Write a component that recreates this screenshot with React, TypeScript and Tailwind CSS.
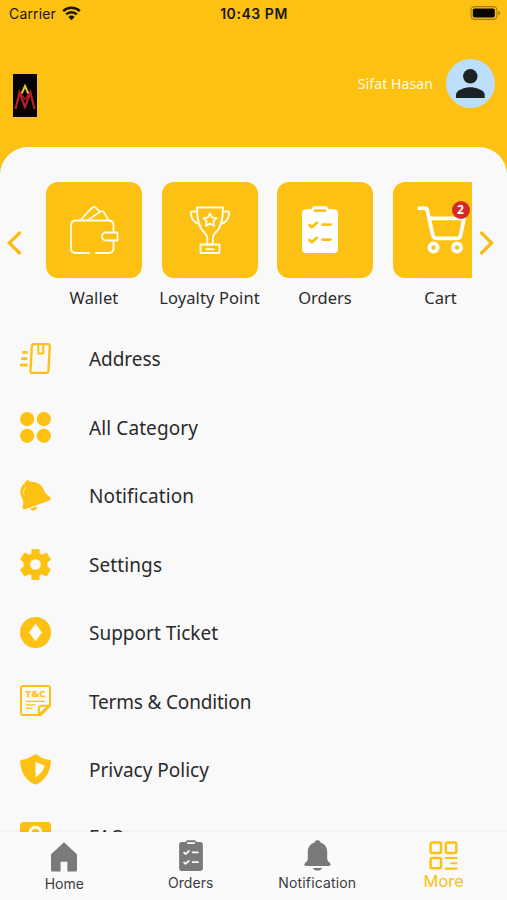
import React from "react";

type IconProps = { className?: string };

const Wifi = () => (
  <svg width="19" height="15" viewBox="0 0 19 15" fill="none" stroke="#1c1500" strokeWidth="2.5" className="-mt-0.5">
    <path d="M1.2 5.2a11.8 11.8 0 0 1 16.6 0" />
    <path d="M4.2 8.400a7.500 7.500 0 0 1 10.600 0" />
    <path d="M9.500 14.200 6.400 10.900a4.400 4.400 0 0 1 6.200 0z" fill="#1c1500" stroke="none" />
  </svg>
);

const Battery = () => (
  <svg width="31" height="14" viewBox="0 0 31 14" className="-mt-0.5">
    <rect x="1" y="0.600" width="26" height="12.800" rx="3.600" fill="none" stroke="#a37a0b" strokeWidth="1.100" />
    <rect x="2.800" y="2.400" width="22" height="9.200" rx="1.800" fill="#0a0700" />
    <path d="M28.500 4.700q1.800 .7 1.800 2.300t-1.800 2.300z" fill="#a37a0b" />
  </svg>
);

const Logo = () => (
  <svg width="24" height="43" viewBox="0 0 24 43" fill="none">
    <rect width="24" height="43" fill="#050303" />
    <path d="M2.500 35 6.500 18.500 12 33 17.500 18.500 21.500 35" stroke="#b51f28" strokeWidth="2.200" />
    <path d="m6.500 18 5.500 7.500 5.500-7.500" stroke="#b51f28" strokeWidth="1.300" />
    <path d="M8.700 19.500 12 12l3.300 7.500" stroke="#e3c22c" strokeWidth="2" />
  </svg>
);

const Avatar = () => (
  <svg width="49" height="49" viewBox="0 0 49 49">
    <circle cx="24.500" cy="24.500" r="24.500" fill="#bbdefb" />
    <circle cx="24.300" cy="17.300" r="7.200" fill="#1b2226" />
    <path d="M10 39v-3.400c0-4.800 9.500-7.400 14.300-7.400s14.400 2.600 14.400 7.400V39z" fill="#1b2226" />
  </svg>
);

const Wallet = () => (
  <svg width="96" height="96" viewBox="0 0 96 96" fill="none" stroke="#fffbe8" strokeWidth="1.800" strokeLinecap="round" strokeLinejoin="round">
    <path d="M43 71H30q-5 0-5-5V43.500q0-5 5-5h32.500q5 0 5 5V50M67.500 58.500V66q0 5-5 5H50" />
    <path d="M71.500 50.500H60a4 4 0 0 0 0 8h11.500z" />
    <path d="M34.500 38 45.500 26.200q2.200-2.400 4.700-.2l3.600 3.800M42 38l12.200-8.300q2.600-1.400 4 1L62.500 38" />
  </svg>
);

const Trophy = () => (
  <svg width="96" height="96" viewBox="0 0 96 96" fill="none" stroke="#fffbe8" strokeWidth="1.900" strokeLinejoin="round">
    <path d="M35 25.500h26c0 13-2 20.500-8.200 26-1.600 1.500-2 3-2 5v6h-5.600v-6c0-2-.4-3.500-2-5-6.200-5.500-8.200-13-8.200-26z" />
    <path d="M35 29.500h-5q-1.500 0-1.200 2c.8 6 3.600 9.500 8.400 10.200M61 29.500h5q1.500 0 1.200 2c-.8 6-3.600 9.500-8.400 10.200" />
    <path d="m48 31.300 2 4.100 4.500.7-3.200 3.200.8 4.500-4.100-2.200-4.100 2.200.8-4.500-3.200-3.200 4.500-.7z" />
    <path d="M38.500 62.500h19v8.500h-19zM43.500 67.200h9" />
  </svg>
);

const Clipboard = ({ className, mark }: IconProps & { mark: string }) => (
  <svg className={className} viewBox="0 0 36 47">
    <path d="M4 3.200h5.500Q10 .2 13 .2h10q3 0 3.500 3H32q4 0 4 4V43q0 4-4 4H4q-4 0-4-4V7.200q0-4 4-4z" fill="currentColor" />
    <g fill="none" stroke={mark} strokeWidth="2.700" strokeLinecap="round" strokeLinejoin="round">
      <path d="M13 4.700h10" />
      <path d="m7.500 19 2.300 2.300 5-4.600M20.500 18.600h8M7.500 34l2.300 2.300 5-4.600M20.500 33.600h8" />
    </g>
  </svg>
);

const Cart = () => (
  <svg width="96" height="96" viewBox="0 0 96 96" fill="none" stroke="white" strokeWidth="3.800" strokeLinejoin="round">
    <path d="M26.300 26.200h5.500q2 0 2.500 2L39.500 52q.8 4.300 4 4.300h20.700q2.800 0 3.300-2.800L71 36.400H36.500" strokeLinecap="round" />
    <circle cx="40.500" cy="65.500" r="4.100" />
    <circle cx="64" cy="65.500" r="4.100" />
  </svg>
);

const Address = () => (
  <svg width="31" height="31" viewBox="0 0 31 31" fill="none" stroke="currentColor" strokeWidth="2.300" strokeLinejoin="round">
    <path d="M13.500 1.200h14.800q1.600 0 1.500 1.600l-1.400 25.500q-.1 1.500-1.600 1.500H12q-1.600 0-1.500-1.600l1.400-25.500q.1-1.500 1.600-1.500z" />
    <path d="M18.300 1.500V10.600h5V1.500" strokeWidth="2" />
    <path d="M2.300 9.300h5.400M1.200 15.700h6M0 22.100h7.400" strokeWidth="2.700" />
  </svg>
);

const Category = () => (
  <svg width="31" height="31" viewBox="0 0 31 31" fill="currentColor">
    <circle cx="7.100" cy="7.100" r="7.100" /><circle cx="23.800" cy="7.100" r="7.100" />
    <circle cx="7.100" cy="23.800" r="7.100" /><circle cx="23.800" cy="23.800" r="7.100" />
  </svg>
);

const Bell = () => (
  <svg width="31" height="31" viewBox="0 0 31 31" fill="currentColor">
    <path d="M4.800 3.200C4.700 1.600 6 .5 7.500.4c1.400-.2 2.300.6 3 1.500 6.300-.4 11 2.700 13.200 7.700 1.300 3 2.300 4.700 5.800 7.200 1.800 1.300 1.700 3.100-.2 3.700L5.300 29.200c-1.800.6-3.200-.7-2.700-2.500C3.900 22.500 3 20.500 1.500 17-.8 11.500.4 6.500 4.800 3.200z" />
    <path d="m10.300 28.700 6.600-2.400q.3 3.500-3.100 4.200-2.300.4-3.500-1.800z" />
    <path d="M3.600 13c-.3-2.800.7-4.900 2.500-6.100" fill="none" stroke="#fff0b8" strokeWidth=".9" strokeLinecap="round" />
    <circle cx="4.200" cy="15.500" r=".6" fill="#fff0b8" />
  </svg>
);

const Gear = () => (
  <svg width="31" height="31" viewBox="0 0 31 31" fill="currentColor" stroke="currentColor" strokeWidth=".6" strokeLinejoin="round" fillRule="evenodd">
    <path d="M11.800.3h7.400v4.300l2.600 1.500L26.500 3.800 30.600 10.200l-3.500 3.500v3.600l3.500 3.500-4.100 6.400-4.700-2.300-2.600 1.500v4.300h-7.400v-4.300l-2.600-1.500-4.700 2.300L.4 20.800l3.500-3.500v-3.600L.4 10.200l4.100-6.400 4.700 2.300 2.600-1.500zM15.500 9.900a5.600 5.600 0 1 0 0 11.200 5.600 5.600 0 0 0 0-11.200z" />
  </svg>
);

const Support = () => (
  <svg width="31" height="31" viewBox="0 0 31 31">
    <circle cx="15.500" cy="15.500" r="15.500" fill="currentColor" />
    <path d="m15.500 7.200 6 8.300-6 8.300-6-8.300z" fill="#fffdf5" stroke="#fffdf5" strokeWidth=".8" strokeLinejoin="round" />
  </svg>
);

const Terms = () => (
  <svg width="31" height="31" viewBox="0 0 31 31" fill="none" stroke="currentColor" strokeWidth="2" strokeLinejoin="round">
    <path d="M3 1h25q2 0 2 2v17.700l-9.300 9.300H3q-2 0-2-2V3q0-2 2-2z" />
    <path d="M18.800 29.500V24q0-3.300 3.300-3.300h7.400z" />
    <path d="M6 16.300h19M6 19.800h9M6 23.300h6.500" strokeWidth="1.300" />
    <text x="5.300" y="12.200" fill="currentColor" stroke="none" fontFamily="Noto Sans, sans-serif" fontWeight="800" fontSize="9" textLength="20.500" lengthAdjust="spacingAndGlyphs">T&amp;C</text>
  </svg>
);

const Shield = () => (
  <svg width="31" height="31" viewBox="0 0 31 31" fill="currentColor">
    <path d="M13.800.9q1.700-1.200 3.400 0c3.700 2.800 7.600 4.300 12 4.800 1.200.2 1.800.9 1.700 2C30.200 17.500 26.200 25 17.800 29.800q-2.300 1.300-4.600 0C4.800 25 .8 17.500.1 7.700 0 6.600.6 5.900 1.800 5.700c4.400-.5 8.300-2 12-4.800z" />
    <path d="M15.500 7.700v15.500c3.800-2.400 6.900-5.800 8.900-10.300q.5-1.200-.6-1.700z" fill="#fffdf5" />
  </svg>
);

const Faq = () => (
  <svg width="31" height="31" viewBox="0 0 31 31">
    <rect width="31" height="31" rx="3.500" fill="currentColor" />
    <path d="M10 11.500c0-8.300 11-8.300 11 0 0 4-5.500 4-5.500 8.500" fill="none" stroke="#fffdf5" strokeWidth="3" />
  </svg>
);

const Home = () => (
  <svg width="26" height="30" viewBox="0 0 26 30" fill="currentColor">
    <path d="M13 .2 25.600 12q.4.400.4 1v15q0 1.500-1.500 1.500h-8.100V19.700H9.600v9.800H1.500Q0 29.500 0 28V13q0-.6.400-1z" />
  </svg>
);

const NavBell = () => (
  <svg width="27" height="31" viewBox="0 0 27 31" fill="currentColor">
    <path d="M10.500 2.600C11 .8 12 .2 13.500.2s2.500.6 3 2.400c4.700 1.500 6.700 5.200 6.700 9.400v6.500c0 1.600.8 2.800 2.500 4.300 1.700 1.600.9 3.200-.8 3.200H2.100c-1.700 0-2.500-1.600-.8-3.200 1.700-1.500 2.500-2.700 2.500-4.300V12c0-4.200 2-7.900 6.700-9.400zM8.800 27.900h9.400c-1.200 3.400-8.200 3.400-9.400 0z" />
  </svg>
);

const More = () => (
  <svg width="29" height="29" viewBox="0 0 29 29" fill="none" stroke="currentColor" strokeWidth="2.500">
    <rect x="1.600" y="1.600" width="10.400" height="10.400" rx="1.500" />
    <rect x="16.900" y="1.600" width="10.400" height="10.400" rx="1.500" />
    <rect x="1.600" y="16.900" width="10.400" height="10.400" rx="1.500" />
    <path d="M16 17h12.500M21.500 22.300h7M16 27.600h12.500" strokeWidth="2.100" />
  </svg>
);

const shortcuts = [
  { label: "Wallet", tracking: "tracking-[0.15px]", icon: <Wallet /> },
  { label: "Loyalty Point", tracking: "tracking-[0.1px]", icon: <Trophy /> },
  { label: "Orders", tracking: "tracking-[0px]", icon: <Clipboard className="mr-2.5 h-[47px] w-9 text-white" mark="#fdc113" /> },
  { label: "Cart", tracking: "tracking-[0px]", icon: <Cart />, badge: 2 },
];

const rows = [
  { label: "Address", icon: <Address />, tracking: "tracking-[-0.05px]" },
  { label: "All Category", icon: <Category />, tracking: "tracking-[0.1px]" },
  { label: "Notification", icon: <Bell />, tracking: "tracking-[0.1px]" },
  { label: "Settings", icon: <Gear />, tracking: "tracking-[0.1px]" },
  { label: "Support Ticket", icon: <Support />, tracking: "tracking-[0px]" },
  { label: "Terms & Condition", icon: <Terms />, tracking: "tracking-[-0.18px]" },
  { label: "Privacy Policy", icon: <Shield />, tracking: "tracking-[0px]" },
  { label: "FAQ", icon: <Faq />, tracking: "tracking-[0px] -mt-[3px]" },
];

export default function App() {
  return (
    <div className="flex h-[900px] w-[507px] flex-col overflow-hidden bg-[#fdc113] font-['Noto_Sans',sans-serif] text-[#2b2b2b]">
      <div className="grid h-7 shrink-0 grid-cols-3 items-center pr-[6px] pl-[9px] font-['Inter',sans-serif] text-[#1c1500]">
        <div className="flex items-center gap-1.5 text-[14px] tracking-[0.15px]"><span className="-mt-0.5">Carrier</span><Wifi /></div>
        <div className="-mt-0.5 pr-0.5 text-center text-[14px] font-semibold tracking-[0.55px] whitespace-nowrap">10:43 PM</div>
        <div className="flex justify-end"><Battery /></div>
      </div>
      <header className="flex h-[119px] shrink-0 items-start justify-between pr-3 pl-[13px]">
        <div className="pt-[46px]"><Logo /></div>
        <div className="flex items-center gap-[13px] pt-[31px]">
          <span className="text-[14px] tracking-[0.1px] text-[#fffbea]">Sifat Hasan</span>
          <Avatar />
        </div>
      </header>
      <main className="flex min-h-0 flex-1 flex-col overflow-hidden rounded-t-[28px] bg-[#f9f9f9]">
        <section className="flex h-[177.500px] shrink-0 pt-[34.500px]">
          <button className="flex h-[122px] w-[46px] shrink-0 items-center pl-[7px] text-[#fdb913]" aria-label="Previous">
            <svg width="15" height="24" viewBox="0 0 15 24" fill="none" stroke="currentColor" strokeWidth="3.200"><path d="M13.500 1 2.300 12l11.200 11" /></svg>
          </button>
          <div className="flex w-[425.500px] shrink-0 gap-[19.500px] overflow-hidden">
            {shortcuts.map((s) => (
              <div key={s.label} className="flex w-24 shrink-0 flex-col items-center">
                <div className="relative flex size-24 items-center justify-center rounded-[12px] bg-[#fdc113]">
                  {s.icon}
                  {s.badge && (
                    <span className="absolute top-[19px] left-[59px] flex size-[18px] items-center justify-center rounded-full bg-[#d42b28] text-[12px] font-bold text-white">{s.badge}</span>
                  )}
                </div>
                <span className={`mt-[8.500px] text-[16.500px] leading-6 whitespace-nowrap ${s.tracking}`}>{s.label}</span>
              </div>
            ))}
          </div>
          <button className="flex h-[122px] items-center pl-[7px] text-[#fdb913]" aria-label="Next">
            <svg width="15" height="24" viewBox="0 0 15 24" fill="none" stroke="currentColor" strokeWidth="3.200"><path d="m1.500 1 11.200 11L1.500 23" /></svg>
          </button>
        </section>
        <ul className="flex flex-col">
          {rows.map((r) => (
            <li key={r.label} className="flex h-[68.450px] shrink-0 items-center gap-[38px] pl-[20px]">
              <span className="text-[#fdc113]">{r.icon}</span>
              <span className={`pt-[2px] text-[19px] whitespace-nowrap ${r.tracking}`}>{r.label}</span>
            </li>
          ))}
        </ul>
      </main>
      <nav className="relative z-10 grid h-[68px] shrink-0 grid-cols-4 bg-[#fafafa] pl-px font-['Inter',sans-serif] text-[14px] leading-[21px] shadow-[0_-1px_3px_rgba(0,0,0,0.05)]">
        <div className="flex flex-col items-center pt-[9.500px] text-[#7a7a7a]"><Home /><span className="mt-px text-[#3c3c3c]">Home</span></div>
        <div className="flex flex-col items-center pt-2 text-[#7a7a7a]"><Clipboard className="h-[31px] w-6" mark="#fafafa" /><span className="mt-px tracking-[0.1px] text-[#3c3c3c]">Orders</span></div>
        <div className="flex flex-col items-center pt-2 text-[#7a7a7a]"><NavBell /><span className="mt-px tracking-[0.150px] text-[#3c3c3c]">Notification</span></div>
        <div className="flex flex-col items-center pt-[9px] text-[#fdc113]"><More /><span className="text-[16.500px] leading-[22px]">More</span></div>
      </nav>
    </div>
  );
}
